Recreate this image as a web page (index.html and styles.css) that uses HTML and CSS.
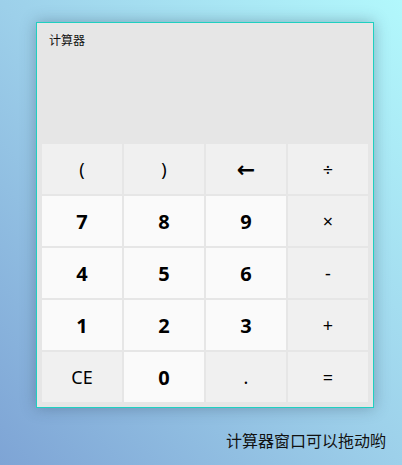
FILE: index.html
```html
<!DOCTYPE html>
<html lang="zh">
<head>
<meta charset="utf-8">
<title>计算器</title>
<link rel="stylesheet" href="styles.css">
</head>
<body>
<div class="window">
  <div class="display"><span class="title">计算器</span></div>
  <div class="keys">
    <div class="key op">(</div>
    <div class="key op">)</div>
    <div class="key op arrow">←</div>
    <div class="key op">÷</div>
    <div class="key num">7</div>
    <div class="key num">8</div>
    <div class="key num">9</div>
    <div class="key op">×</div>
    <div class="key num">4</div>
    <div class="key num">5</div>
    <div class="key num">6</div>
    <div class="key op">-</div>
    <div class="key num">1</div>
    <div class="key num">2</div>
    <div class="key num">3</div>
    <div class="key op">+</div>
    <div class="key op">CE</div>
    <div class="key num">0</div>
    <div class="key op">.</div>
    <div class="key op">=</div>
  </div>
</div>
<p class="hint">计算器窗口可以拖动哟</p>
</body>
</html>
```
FILE: styles.css
```css
html, body {
  margin: 0;
  padding: 0;
}
body {
  width: 402px;
  height: 465px;
  overflow: hidden;
  background: linear-gradient(to top right, #7ea4d5 0%, #9dd0ea 50%, #b2f8fc 100%);
  font-family: "Noto Sans", "Noto Sans CJK SC", sans-serif;
  display: flex;
  flex-direction: column;
}
.window {
  box-sizing: border-box;
  margin: 22px 0 0 36px;
  width: 338px;
  height: 386px;
  border: 1px solid #1fd0c0;
  background: #e6e6e6;
  box-shadow: 0 0 14px rgba(40, 60, 80, 0.35);
  display: flex;
  flex-direction: column;
}
.display {
  height: 121px;
  box-sizing: border-box;
  padding: 5px 12px;
}
.title {
  font-family: "Noto Sans CJK SC", sans-serif;
  font-size: 12px;
  line-height: 16px;
  color: #111;
}
.keys {
  display: grid;
  grid-template-columns: repeat(4, 80px);
  grid-auto-rows: 50px;
  gap: 2px;
  padding: 0 4px 5px 5px;
}
.key {
  display: flex;
  align-items: center;
  justify-content: center;
  color: #000;
}
.op {
  background: #f0f0f0;
  font-size: 18px;
}
.num {
  background: #fafafa;
  font-size: 20px;
  font-weight: bold;
}
.arrow {
  font-family: "DejaVu Sans", sans-serif;
  font-size: 22px;
  font-weight: bold;
}
.hint {
  margin: 20px 16px 0 0;
  text-align: right;
  font-family: "Noto Sans CJK SC", sans-serif;
  font-size: 16px;
  line-height: 24px;
  color: #111;
}
```
